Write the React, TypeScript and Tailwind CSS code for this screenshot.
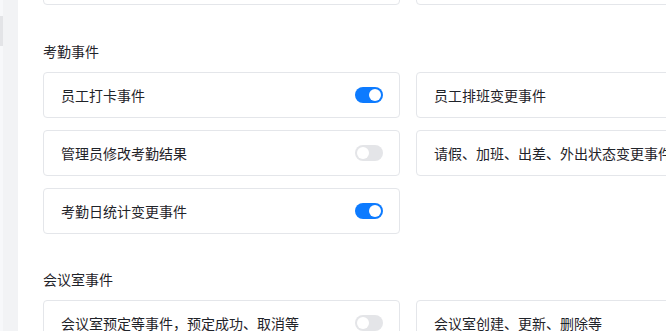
import type { JSX } from "react";

type EventItem = { label: string; on?: boolean };

const SECTIONS: Array<{ title: string; items: EventItem[] }> = [
  {
    title: "考勤事件",
    items: [
      { label: "员工打卡事件", on: true },
      { label: "员工排班变更事件", on: true },
      { label: "管理员修改考勤结果", on: false },
      { label: "请假、加班、出差、外出状态变更事件", on: false },
      { label: "考勤日统计变更事件", on: true },
    ],
  },
  {
    title: "会议室事件",
    items: [
      { label: "会议室预定等事件，预定成功、取消等", on: false },
      { label: "会议室创建、更新、删除等", on: false },
    ],
  },
];

function Toggle({ on }: { on?: boolean }): JSX.Element {
  return (
    <span
      className={
        on
          ? "flex h-[16px] w-[28px] shrink-0 items-center justify-end rounded-full bg-[#0d7bff] px-[2px]"
          : "flex h-[16px] w-[28px] shrink-0 items-center justify-start rounded-full bg-[#e4e5e8] px-[2px]"
      }
    >
      <span className="h-[12px] w-[12px] rounded-full bg-white" />
    </span>
  );
}

function EventCard({ item }: { item: EventItem }): JSX.Element {
  return (
    <div className="flex h-[46px] items-center justify-between rounded border border-[#e4e6ea] bg-white pl-[17px] pr-[16px]">
      <span className="whitespace-nowrap text-[14px] text-[#1f2329]">{item.label}</span>
      <Toggle on={item.on} />
    </div>
  );
}

export default function App(): JSX.Element {
  return (
    <div
      className="flex h-[331px] w-[666px] overflow-hidden bg-white"
      style={{ fontFamily: '"Noto Sans CJK SC", "Noto Sans", sans-serif' }}
    >
      <div className="flex w-[18px] shrink-0">
        <div className="flex w-[3px] flex-col bg-[#f7f8fa]">
          <div className="mt-[16px] h-[30px] bg-[#e3e4e7]" />
        </div>
        <div className="flex-1 bg-[#f2f3f5]" />
      </div>
      <div className="-mt-[41px] w-[730px] shrink-0 pl-[25px]">
        <div className="grid grid-cols-[357px_357px] gap-x-[16px]">
          <div className="h-[46px] rounded border border-[#e4e6ea]" />
          <div className="h-[46px] rounded border border-[#e4e6ea]" />
        </div>
        {SECTIONS.map((section, i) => (
          <section key={section.title} className={i === 0 ? "mt-[36px]" : "mt-[35px]"}>
            <h3 className="mb-[11px] h-[20px] text-[14px] leading-[20px] text-[#1f2329]">
              {section.title}
            </h3>
            <div className="grid grid-cols-[357px_357px] gap-x-[16px] gap-y-[12px]">
              {section.items.map((item) => (
                <EventCard key={item.label} item={item} />
              ))}
            </div>
          </section>
        ))}
      </div>
    </div>
  );
}
